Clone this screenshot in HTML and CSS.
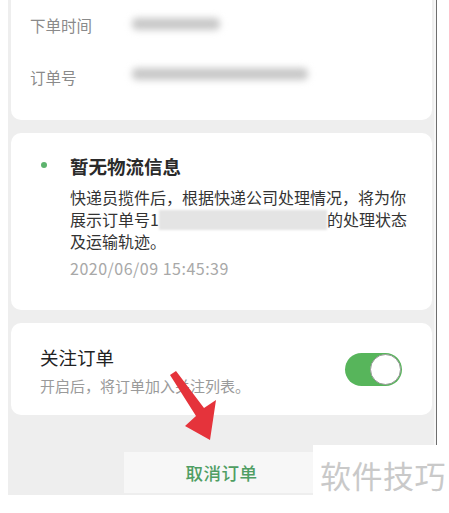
FILE: index.html
```html
<!DOCTYPE html>
<html lang="zh">
<head>
<meta charset="utf-8">
<link rel="stylesheet" href="styles.css">
</head>
<body>
<div class="phone">
  <div class="card card-info">
    <div class="info-row"><span class="label">下单时间</span><span class="blur blur-short"></span></div>
    <div class="info-row"><span class="label">订单号</span><span class="blur blur-long"></span></div>
  </div>
  <div class="card card-track">
    <div class="track-head"><span class="dot"></span><span class="track-title">暂无物流信息</span></div>
    <div class="track-body">
      <p class="track-text">快递员揽件后，根据快递公司处理情况，将为你<br>展示订单号1<span class="mask"></span>的处理状态<br>及运输轨迹。</p>
      <p class="track-date">2020/06/09 15:45:39</p>
    </div>
  </div>
  <div class="card card-follow">
    <div class="follow-text">
      <div class="follow-title">关注订单</div>
      <div class="follow-sub">开启后，将订单加入关注列表。</div>
    </div>
    <div class="switch"><span class="knob"></span></div>
  </div>
  <div class="cancel-btn">取消订单</div>
  <svg class="arrow" width="449" height="513" viewBox="0 0 449 513">
    <polygon points="170,375 176,371 204,408 216,400 210,440 185,426 196,416" fill="#e5333b"/>
  </svg>
</div>
<div class="watermark">软件技巧</div>
</body>
</html>
```
FILE: styles.css
```css
html, body {
  margin: 0;
  padding: 0;
}
body {
  width: 449px;
  height: 513px;
  overflow: hidden;
  background: #ffffff;
  font-family: "Noto Sans CJK SC", "Noto Sans", sans-serif;
  position: relative;
}
.phone {
  margin-left: 8px;
  width: 426px;
  height: 495px;
  box-sizing: border-box;
  padding: 0 2px 0 3px;
  background: #eeeeee;
  box-shadow: 2px 0 0 #f7f7f7, 3px 0 0 #6e6e6e;
  display: flex;
  flex-direction: column;
  gap: 13px;
}
.card {
  background: #ffffff;
  border-radius: 10px;
  box-sizing: border-box;
}
.card-info {
  height: 120px;
  border-radius: 0 0 10px 10px;
  padding: 10px 0 0 19px;
  display: flex;
  flex-direction: column;
  gap: 22px;
}
.info-row {
  height: 30px;
  display: flex;
  align-items: center;
}
.label {
  width: 102px;
  font-size: 15.5px;
  color: #8a8a8a;
}
.blur {
  display: inline-block;
  height: 12px;
  background: #c8c8c8;
  filter: blur(3.5px);
  border-radius: 5px;
}
.blur-short { width: 88px; margin-top: -2px; }
.blur-long { width: 176px; margin-top: -6px; }
.card-track {
  height: 177px;
  padding: 20px 20px 0 29px;
}
.track-head {
  display: flex;
  align-items: center;
  height: 26px;
}
.dot {
  width: 6px;
  height: 6px;
  border-radius: 50%;
  background: #5db36d;
  margin-left: 1px;
  margin-right: 23px;
  margin-top: -2px;
}
.track-title {
  font-size: 18.5px;
  font-weight: 700;
  color: #2a2a2a;
}
.track-body {
  padding-left: 30px;
  margin-top: 7px;
}
.track-text {
  margin: 0;
  font-size: 16px;
  line-height: 22px;
  color: #333333;
}
.mask {
  display: inline-block;
  width: 168px;
  height: 20px;
  vertical-align: -4px;
  background: #e4e4e4;
  filter: blur(1px);
}
.track-date {
  margin: 6px 0 0;
  font-size: 16px;
  line-height: 20px;
  letter-spacing: 0.5px;
  color: #a8a8a8;
}
.card-follow {
  height: 92px;
  padding: 0 30px 0 29px;
  display: flex;
  align-items: center;
  justify-content: space-between;
}
.follow-text {
  display: flex;
  flex-direction: column;
  gap: 7px;
  margin-top: 2px;
}
.follow-title {
  font-size: 18.5px;
  line-height: 24px;
  color: #222222;
}
.follow-sub {
  font-size: 15px;
  line-height: 20px;
  color: #9a9a9a;
}
.switch {
  width: 57px;
  height: 33px;
  border-radius: 17px;
  background: #57b55b;
  position: relative;
}
.knob {
  position: absolute;
  right: 1px;
  top: 1px;
  width: 29px;
  height: 29px;
  border-radius: 50%;
  background: #ffffff;
  border: 1px solid #9a9a9a;
}
.cancel-btn {
  align-self: center;
  margin-top: 24px;
  width: 196px;
  height: 41px;
  background: #f7f7f7;
  display: flex;
  align-items: center;
  justify-content: center;
  font-size: 17.5px;
  font-weight: 500;
  color: #4f9e63;
  letter-spacing: 0.5px;
}
.arrow {
  position: absolute;
  left: 0;
  top: 0;
  pointer-events: none;
}
.watermark {
  position: absolute;
  left: 313px;
  top: 445px;
  width: 136px;
  height: 68px;
  background: #ffffff;
  box-sizing: border-box;
  padding: 10px 0 0 7px;
  font-size: 31px;
  line-height: 40px;
  color: #c9c9c9;
  letter-spacing: 0.5px;
}
```
